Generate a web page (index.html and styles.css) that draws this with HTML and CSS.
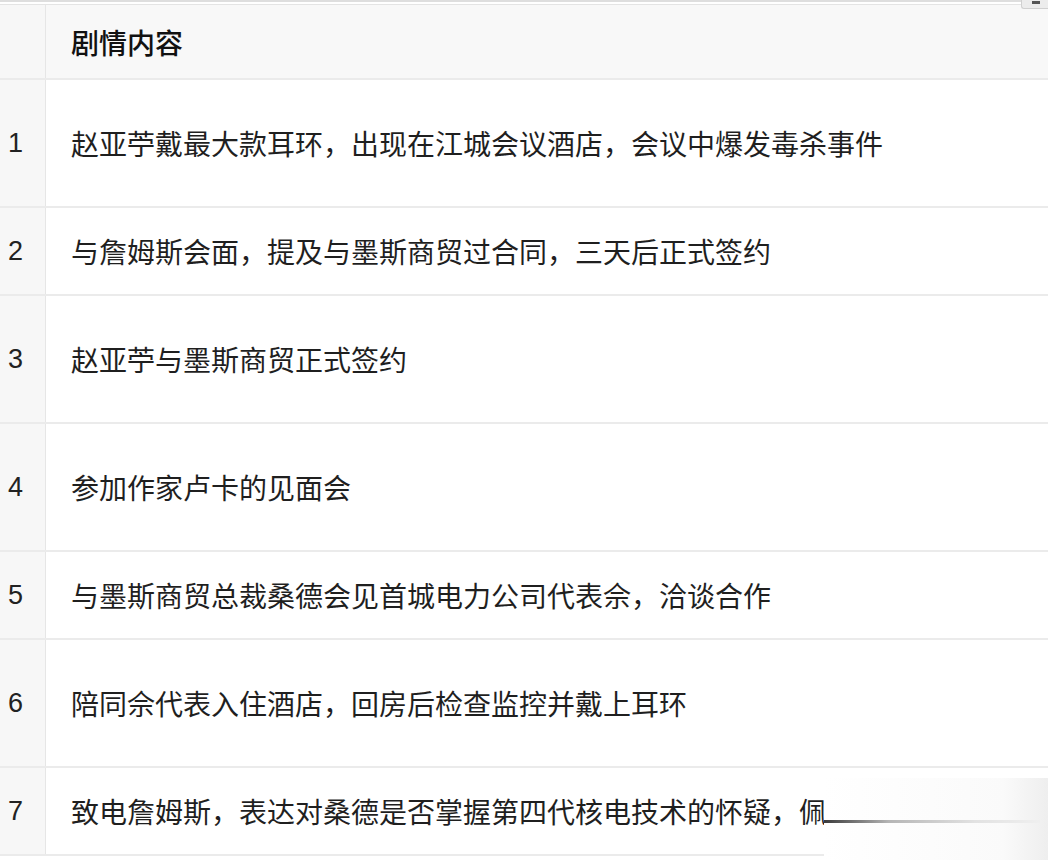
FILE: index.html
```html
<!DOCTYPE html>
<html lang="zh-CN">
<head>
    <meta charset="UTF-8">
    <meta name="viewport" content="width=device-width, initial-scale=1.0">
    <title>剧情内容</title>
    <link rel="stylesheet" href="styles.css">
</head>
<body>
    <div class="page">
        <div class="top-strip"></div>

        <div class="plot-table">
            <div class="row head">
                <div class="idx"></div>
                <div class="cell">剧情内容</div>
            </div>
            <div class="row tall">
                <div class="idx">1</div>
                <div class="cell">赵亚苧戴最大款耳环，出现在江城会议酒店，会议中爆发毒杀事件</div>
            </div>
            <div class="row short">
                <div class="idx">2</div>
                <div class="cell">与詹姆斯会面，提及与墨斯商贸过合同，三天后正式签约</div>
            </div>
            <div class="row tall">
                <div class="idx">3</div>
                <div class="cell">赵亚苧与墨斯商贸正式签约</div>
            </div>
            <div class="row tall">
                <div class="idx">4</div>
                <div class="cell">参加作家卢卡的见面会</div>
            </div>
            <div class="row short">
                <div class="idx">5</div>
                <div class="cell">与墨斯商贸总裁桑德会见首城电力公司代表佘，洽谈合作</div>
            </div>
            <div class="row tall">
                <div class="idx">6</div>
                <div class="cell">陪同佘代表入住酒店，回房后检查监控并戴上耳环</div>
            </div>
            <div class="row short">
                <div class="idx">7</div>
                <div class="cell">致电詹姆斯，表达对桑德是否掌握第四代核电技术的怀疑，佩</div>
            </div>
        </div>

        <div class="corner-tab"><span></span></div>
        <div class="fade-out">
            <div class="fade-line"></div>
        </div>
    </div>
</body>
</html>
```

FILE: styles.css
```css
body {
    margin: 0;
    padding: 0;
    background-color: #fff;
    color: #1f1f1f;
    font-family: "Noto Sans CJK SC", "Noto Sans", sans-serif;
}

.page {
    position: relative;
    width: 1048px;
    height: 860px;
    overflow: hidden;
}

.top-strip {
    height: 2px;
    background-color: #dedede;
    margin-bottom: 2px;
}

.plot-table {
    border-top: 1px solid #e4e4e4;
}

.row {
    display: grid;
    grid-template-columns: 46px 1fr;
    box-sizing: border-box;
    border-bottom: 2px solid #ebebeb;
}

.row.head {
    height: 75px;
    background-color: #f8f8f8;
}

.row.tall {
    height: 128px;
}

.row.short {
    height: 88px;
}

.idx {
    display: flex;
    align-items: center;
    padding-left: 8px;
    background-color: #f7f7f7;
    border-right: 1px solid #e6e6e6;
    font-family: "Liberation Sans", Arial, sans-serif;
    font-size: 27px;
    color: #222;
}

.cell {
    display: flex;
    align-items: center;
    padding-left: 25px;
    font-size: 28px;
    white-space: nowrap;
    overflow: hidden;
}

.row.head .cell {
    font-weight: 500;
    color: #111;
}

.corner-tab {
    position: absolute;
    top: 0;
    right: 0;
    width: 26px;
    height: 8px;
    background-color: #ececec;
    border-left: 1px solid #d0d0d0;
    border-bottom: 1px solid #d0d0d0;
    border-bottom-left-radius: 3px;
}

.corner-tab span {
    position: absolute;
    top: 1px;
    left: 10px;
    width: 8px;
    height: 3px;
    background-color: #555;
}

.fade-out {
    position: absolute;
    left: 824px;
    top: 778px;
    right: 0;
    bottom: 0;
    background: linear-gradient(to right, #fff 0%, #fafafa 80%, #eeeeee 100%);
}

.fade-line {
    position: absolute;
    left: 0;
    right: 8px;
    top: 42px;
    height: 3px;
    background: linear-gradient(to right, #3a3a3a 0%, #b5b5b5 30%, #e2e2e2 70%, #efefef 100%);
    filter: blur(0.6px);
}
```
